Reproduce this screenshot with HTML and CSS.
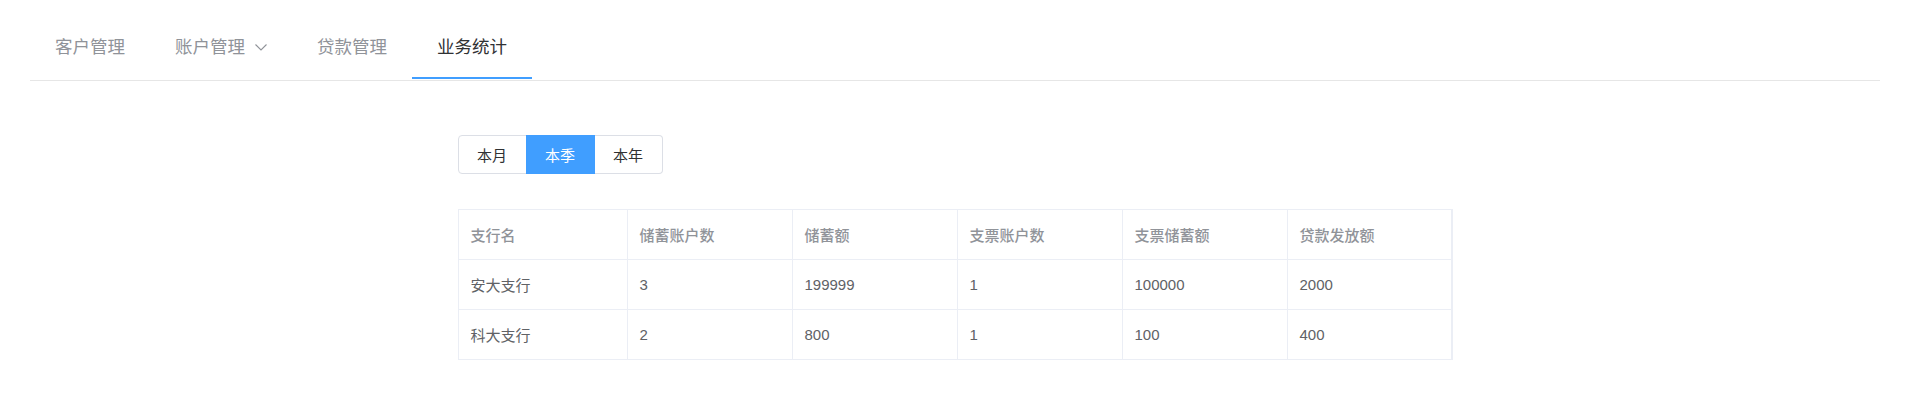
FILE: index.html
```html
<!DOCTYPE html>
<html lang="zh-CN">
<head>
<meta charset="utf-8">
<title>业务统计</title>
<link rel="stylesheet" href="styles.css">
</head>
<body>
<div class="page">
  <nav class="menu">
    <div class="menu-item">客户管理</div>
    <div class="menu-item submenu">账户管理<svg class="arrow" viewBox="0 0 12 7" width="12" height="7"><path d="M0.5 0.5 L6 6 L11.5 0.5" fill="none" stroke="#909399" stroke-width="1.1"/></svg></div>
    <div class="menu-item">贷款管理</div>
    <div class="menu-item active">业务统计</div>
  </nav>
  <main class="content">
    <div class="radio-group">
      <div class="radio-btn">本月</div>
      <div class="radio-btn checked">本季</div>
      <div class="radio-btn">本年</div>
    </div>
    <table class="stats">
      <colgroup>
        <col class="c1"><col class="cn"><col class="cn"><col class="cn"><col class="cn"><col class="cn">
      </colgroup>
      <thead>
        <tr><th>支行名</th><th>储蓄账户数</th><th>储蓄额</th><th>支票账户数</th><th>支票储蓄额</th><th>贷款发放额</th></tr>
      </thead>
      <tbody>
        <tr><td>安大支行</td><td>3</td><td>199999</td><td>1</td><td>100000</td><td>2000</td></tr>
        <tr><td>科大支行</td><td>2</td><td>800</td><td>1</td><td>100</td><td>400</td></tr>
      </tbody>
    </table>
  </main>
</div>
</body>
</html>
```
FILE: styles.css
```css
html, body {
  margin: 0;
  padding: 0;
  background: #fff;
}
body {
  font-family: "Liberation Sans", "Noto Sans CJK SC", sans-serif;
}
.page {
  padding: 14px 27px 0 30px;
}
.menu {
  display: flex;
  border-bottom: 1px solid #e6e6e6;
  padding-bottom: 1px;
}
.menu-item {
  display: flex;
  align-items: center;
  height: 63px;
  padding: 0 25px;
  font-size: 17.5px;
  color: #909399;
  border-bottom: 2px solid transparent;
}
.menu-item.active {
  color: #303133;
  border-bottom-color: #409eff;
}
.submenu .arrow {
  margin-left: 10px;
  margin-top: 4px;
}
.content {
  width: 995px;
  margin: 0 auto;
}
.radio-group {
  display: flex;
  margin-top: 54px;
}
.radio-btn {
  width: 67px;
  height: 37px;
  display: flex;
  align-items: center;
  justify-content: center;
  font-size: 15px;
  color: #303133;
  border: 1px solid #dcdfe6;
  border-left: none;
  background: #fff;
}
.radio-btn:first-child {
  border-left: 1px solid #dcdfe6;
  border-radius: 4px 0 0 4px;
}
.radio-btn:last-child {
  border-radius: 0 4px 4px 0;
}
.radio-btn.checked {
  background: #409eff;
  border-color: #409eff;
  color: #fff;
  box-shadow: -1px 0 0 0 #409eff;
}
.stats {
  margin-top: 35px;
  width: 995px;
  table-layout: fixed;
  border-collapse: collapse;
  border: 1px solid #ebeef5;
  border-right-width: 2px;
  font-size: 15px;
}
.stats col.c1 { width: 169px; }
.stats col.cn { width: 165px; }
.stats th, .stats td {
  height: 50px;
  padding: 0 12px;
  text-align: left;
  border: 1px solid #ebeef5;
  box-sizing: border-box;
}
.stats th {
  color: #909399;
  font-weight: 500;
}
.stats td {
  color: #606266;
}
```
